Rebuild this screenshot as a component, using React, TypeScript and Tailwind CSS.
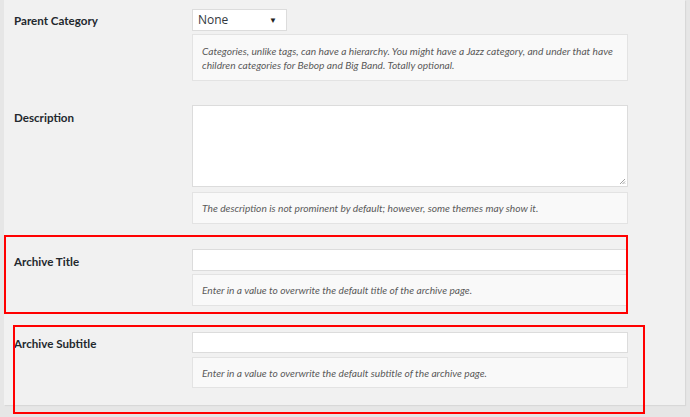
import React from 'react';

const font = { fontFamily: '"Open Sans", "Noto Sans", sans-serif' };

const Help: React.FC<{ children: React.ReactNode; className?: string }> = ({ children, className }) => (
  <div
    className={`border border-[#e3e3e3] bg-[#f9f9f9] px-[9px] font-['Lato',sans-serif] text-[10.2px] italic leading-[14px] text-[#5a5a5a] ${className ?? ''}`}
  >
    {children}
  </div>
);

const Row: React.FC<{ label: string; labelPad: string; className?: string; children: React.ReactNode }> = ({
  label,
  labelPad,
  className,
  children,
}) => (
  <div className={`flex ${className ?? ''}`}>
    <div
      className={`w-[188px] shrink-0 pl-[10px] font-['Lato',sans-serif] text-[11.6px] font-bold text-[#23282d] ${labelPad}`}
    >
      {label}
    </div>
    <div className="flex w-[436px] flex-col">{children}</div>
  </div>
);

export default function App() {
  return (
    <div className="h-[417px] w-[690px] overflow-hidden bg-[#e6e6e6]" style={font}>
      <div className="relative ml-[4px] h-[405px] w-[681px] bg-[#f1f1f1] shadow-[1px_1px_1px_rgba(0,0,0,0.06)]">
        {/* Parent Category */}
        <Row label="Parent Category" labelPad="pt-[3px]" className="pt-[9px]">
          <div className="flex h-[22px] w-[95px] items-center justify-between border border-[#dcdcdc] bg-white pl-[5px] pr-[9px] text-[12px] text-[#32373c]">
            <span>None</span>
            <span className="text-[8px] text-[#222]">▼</span>
          </div>
          <Help className="mt-[3px] h-[47px] pt-[9px] leading-[14.5px]">
            Categories, unlike tags, can have a hierarchy. You might have a Jazz category, and under that have children
            categories for Bebop and Big Band. Totally optional.
          </Help>
        </Row>

        {/* Description */}
        <Row label="Description" labelPad="pt-[4px]" className="mt-[24px]">
          <div className="relative h-[82px] border border-[#dcdcdc] bg-white">
            <svg className="absolute bottom-[1px] right-[1px]" width="7" height="7" viewBox="0 0 7 7">
              <path d="M6 1 L1 6 M6 3.5 L3.5 6 M6 5.5 L5.5 6" stroke="#888" strokeWidth="0.8" />
            </svg>
          </div>
          <Help className="mt-[5px] flex h-[32px] items-center">
            The description is not prominent by default; however, some themes may show it.
          </Help>
        </Row>

        {/* Archive Title */}
        <Row label="Archive Title" labelPad="pt-[4px]" className="mt-[25px]">
          <div className="h-[22px] border border-[#dcdcdc] bg-white" />
          <Help className="mt-[3px] flex h-[32px] items-center">
            Enter in a value to overwrite the default title of the archive page.
          </Help>
        </Row>

        {/* Archive Subtitle */}
        <Row label="Archive Subtitle" labelPad="pt-[3px]" className="mt-[26px]">
          <div className="h-[21px] border border-[#dcdcdc] bg-white" />
          <Help className="mt-[4px] flex h-[31px] items-center">
            Enter in a value to overwrite the default subtitle of the archive page.
          </Help>
        </Row>

        {/* annotation boxes */}
        <div className="pointer-events-none absolute left-0 top-[235px] h-[79px] w-[624px] border-2 border-[#ff0000]" />
        <div className="pointer-events-none absolute left-[9px] top-[325px] h-[89px] w-[632px] border-2 border-[#ff0000]" />
      </div>
    </div>
  );
}
